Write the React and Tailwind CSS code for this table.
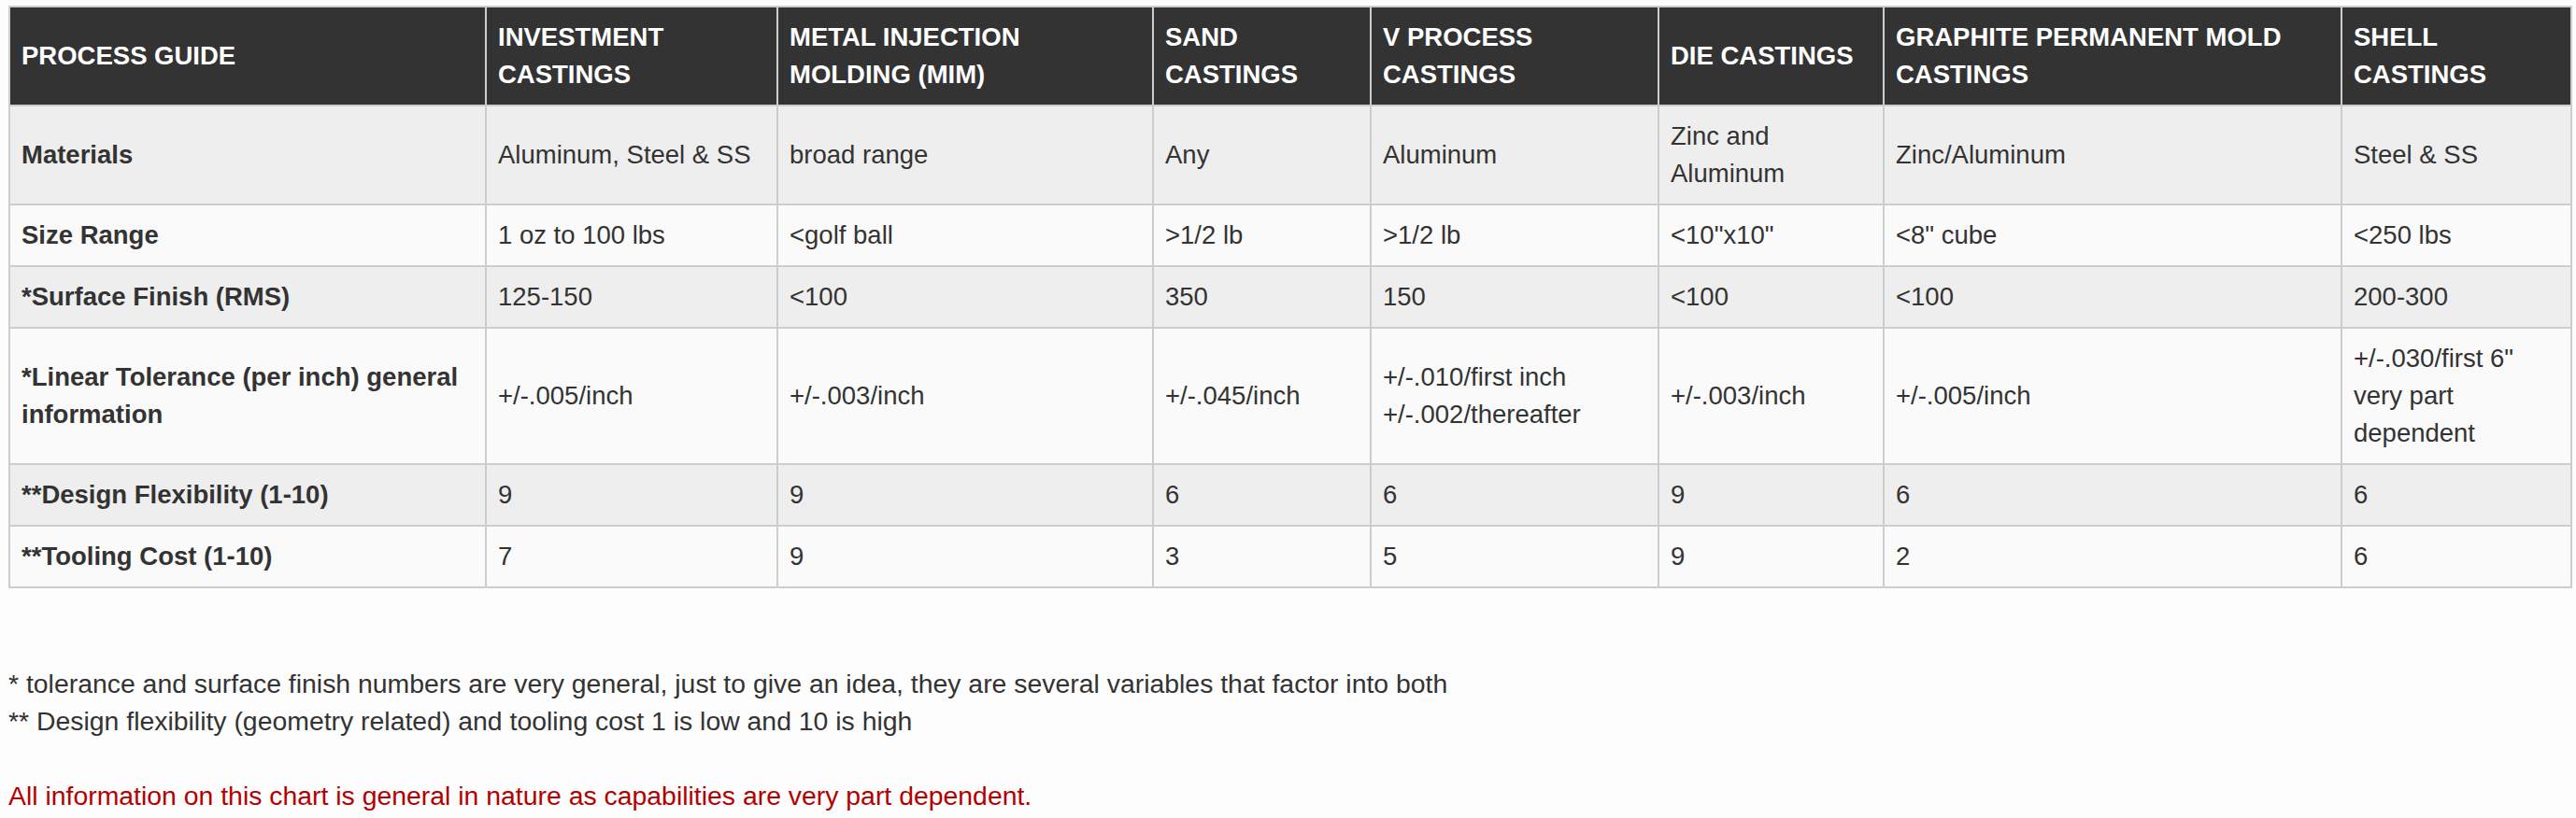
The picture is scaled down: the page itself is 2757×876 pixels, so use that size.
const columns = [
  { title: "PROCESS GUIDE", w: "w-[510px]" },
  { title: "INVESTMENT CASTINGS", w: "w-[312px]" },
  { title: "METAL INJECTION MOLDING (MIM)", w: "w-[402px]" },
  { title: "SAND CASTINGS", w: "w-[233px]" },
  { title: "V PROCESS CASTINGS", w: "w-[308px]" },
  { title: "DIE CASTINGS", w: "w-[241px]" },
  { title: "GRAPHITE PERMANENT MOLD CASTINGS", w: "w-[490px]" },
  { title: "SHELL CASTINGS", w: "w-[246px]" },
];

const rows = [
  ["Materials", "Aluminum, Steel & SS", "broad range", "Any", "Aluminum", "Zinc and Aluminum", "Zinc/Aluminum", "Steel & SS"],
  ["Size Range", "1 oz to 100 lbs", "<golf ball", ">1/2 lb", ">1/2 lb", '<10"x10"', '<8" cube', "<250 lbs"],
  ["*Surface Finish (RMS)", "125-150", "<100", "350", "150", "<100", "<100", "200-300"],
  ["*Linear Tolerance (per inch) general information", "+/-.005/inch", "+/-.003/inch", "+/-.045/inch", "+/-.010/first inch +/-.002/thereafter", "+/-.003/inch", "+/-.005/inch", '+/-.030/first 6" very part dependent'],
  ["**Design Flexibility (1-10)", "9", "9", "6", "6", "9", "6", "6"],
  ["**Tooling Cost (1-10)", "7", "9", "3", "5", "9", "2", "6"],
];

export default function App() {
  return (
    <div className="min-h-screen bg-[#fdfdfd] text-[#333] font-['Liberation_Sans',Arial,sans-serif] text-[27.5px] leading-[40px] pt-[6px] pl-[9px]">
      <table className="table-fixed border-collapse w-[2744px]">
        <colgroup>
          {columns.map((c) => (
            <col key={c.title} className={c.w} />
          ))}
        </colgroup>
        <thead>
          <tr className="bg-[#333333]">
            {columns.map((c) => (
              <th key={c.title} className="border-2 border-[#cdcdcd] px-3 py-3 text-left font-bold text-white align-middle">
                {c.title}
              </th>
            ))}
          </tr>
        </thead>
        <tbody>
          {rows.map((r, i) => (
            <tr key={r[0]} className={i % 2 === 0 ? "bg-[#eeeeee]" : "bg-[#fafafa]"}>
              {r.map((cell, j) => (
                <td key={j} className={"border-2 border-[#cdcdcd] px-3 py-3 align-middle " + (j === 0 ? "font-bold" : "")}>
                  {cell}
                </td>
              ))}
            </tr>
          ))}
        </tbody>
      </table>

      <div className="mt-[82px] pb-4 text-[28.4px]">
        <p>* tolerance and surface finish numbers are very general, just to give an idea, they are several variables that factor into both</p>
        <p>** Design flexibility (geometry related) and tooling cost 1 is low and 10 is high</p>
        <p className="mt-[40px] text-[#b40000]">All information on this chart is general in nature as capabilities are very part dependent.</p>
      </div>
    </div>
  );
}
